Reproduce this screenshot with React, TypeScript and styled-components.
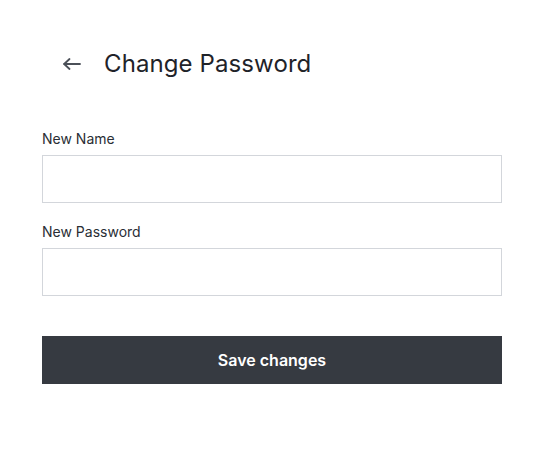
import React from "react";
import styled, { createGlobalStyle } from "styled-components";

const Global = createGlobalStyle`
  html, body { margin: 0; padding: 0; background: #ffffff; }
  body { font-family: Inter, "Noto Sans", sans-serif; color: #1f2329; }
  * { box-sizing: border-box; }
`;

const Page = styled.div`
  width: 553px;
  padding: 40px 51px 0 42px;
`;

const Header = styled.div`
  display: flex;
  align-items: center;
  height: 48px;
  padding-left: 20px;
  gap: 22px;
  margin-bottom: 41px;
`;

const BackButton = styled.button`
  display: flex;
  align-items: center;
  justify-content: center;
  width: 20px;
  height: 20px;
  padding: 0;
  border: none;
  background: none;
  color: #4b5058;
  cursor: pointer;
`;

const Title = styled.h1`
  margin: 0;
  font-size: 24px;
  font-weight: 400;
  line-height: 32px;
  color: #1f2329;
  letter-spacing: 0.1px;
`;

const Form = styled.form`
  display: flex;
  flex-direction: column;
`;

const Field = styled.div`
  display: flex;
  flex-direction: column;
  gap: 6px;
  margin-bottom: 19px;
`;

const Label = styled.label`
  font-size: 14px;
  line-height: 20px;
  color: #2a2e35;
`;

const Input = styled.input`
  height: 48px;
  width: 100%;
  border: 1px solid #d3d6db;
  border-radius: 0;
  padding: 0 12px;
  font-family: inherit;
  font-size: 14px;
  outline: none;
  background: #fff;
`;

const SaveButton = styled.button`
  margin-top: 21px;
  height: 48px;
  width: 100%;
  border: none;
  background: #363a41;
  color: #ffffff;
  font-family: Inter, "Noto Sans", sans-serif;
  font-size: 16px;
  font-weight: 600;
  cursor: pointer;
`;

export default function App() {
  return (
    <>
      <Global />
      <Page>
        <Header>
          <BackButton aria-label="Back">
            <svg width="18" height="12" viewBox="0 0 18 12" fill="none" stroke="currentColor" strokeWidth="1.8" strokeLinecap="round" strokeLinejoin="round">
              <path d="M6.5 1 L1.2 6 L6.5 11" />
              <path d="M1.2 6 H17" />
            </svg>
          </BackButton>
          <Title>Change Password</Title>
        </Header>
        <Form onSubmit={(e) => e.preventDefault()}>
          <Field>
            <Label>New Name</Label>
            <Input type="text" />
          </Field>
          <Field>
            <Label>New Password</Label>
            <Input type="password" />
          </Field>
          <SaveButton type="submit">Save changes</SaveButton>
        </Form>
      </Page>
    </>
  );
}
